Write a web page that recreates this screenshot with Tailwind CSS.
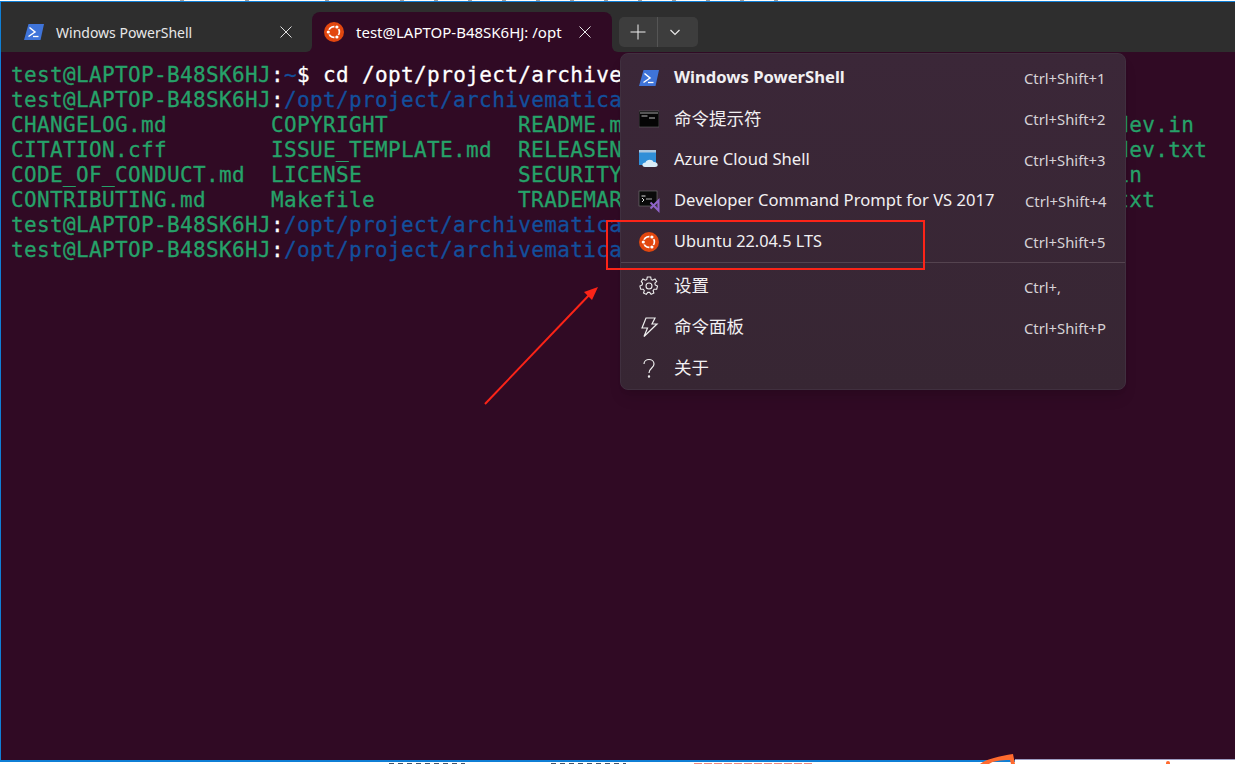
<!DOCTYPE html>
<html lang="en">
<head>
  <meta charset="UTF-8">
  <title>Ubuntu Terminal</title>
  <script src="https://cdn.jsdelivr.net/npm/@tailwindcss/browser@4"></script>
</head>
<body class="bg-white overflow-hidden">
  <div class="relative w-[1235px] h-[764px] pt-px overflow-hidden font-['Noto_Sans','Noto_Sans_CJK_SC',sans-serif]">
    <!-- window -->
    <div class="h-[761px] border border-[#0f7fd6] border-b-2 border-r-0 flex flex-col bg-[#300a24]">
      <!-- tab bar -->
      <div class="h-[50px] shrink-0 flex flex-col bg-[#2e2e2e]">
        <div class="h-[10px] shrink-0"></div>
        <div class="flex-1 flex">
          <div class="w-[311px] bg-[#300a24]">
            <div class="h-full rounded-br-md bg-[#2e2e2e] flex items-center pl-[23px] pr-[20px] text-[#e8e8e8] text-[14px]">
              <svg class="w-5 h-5 mr-[12px] shrink-0" viewBox="0 0 20 20"><path d="M4.500 2h15.500l-3.500 16H0z" fill="#3f74d9"/><path d="M5.500 5.500l5.500 4.500-6.500 4.500" fill="none" stroke="#fff" stroke-width="1.500"/><path d="M9 14.500h5.500" stroke="#fff" stroke-width="1.300"/></svg>
              <span class="flex-1 whitespace-nowrap">Windows PowerShell</span>
              <svg class="w-3 h-3" viewBox="0 0 12 12" fill="none" stroke="#e0e0e0" stroke-width="1"><path d="M.5.5l11 11M11.500.5l-11 11"/></svg>
            </div>
          </div>
          <div class="w-[300px] bg-[#2e2e2e]">
            <div class="h-full rounded-t-lg bg-[#300a24] flex items-center pl-[12px] pr-[21px] text-white text-[15px]">
              <svg class="w-5 h-5 mr-[12px] shrink-0" viewBox="0 0 20 20"><circle cx="10" cy="10" r="10" fill="#e2470f"/><circle cx="10" cy="10" r="5.400" fill="none" stroke="#fff" stroke-width="1.600"/><circle cx="4.300" cy="10" r="2.600" fill="#e2470f"/><circle cx="12.900" cy="5" r="2.600" fill="#e2470f"/><circle cx="12.900" cy="15" r="2.600" fill="#e2470f"/><circle cx="4.300" cy="10" r="1.600" fill="#fff"/><circle cx="12.900" cy="5" r="1.600" fill="#fff"/><circle cx="12.900" cy="15" r="1.600" fill="#fff"/></svg>
              <span class="flex-1 whitespace-nowrap">test@LAPTOP-B48SK6HJ: /opt</span>
              <svg class="w-3 h-3" viewBox="0 0 12 12" fill="none" stroke="#e8e8e8" stroke-width="1"><path d="M.5.5l11 11M11.500.5l-11 11"/></svg>
            </div>
          </div>
          <div class="flex-1 bg-[#300a24]">
            <div class="h-full rounded-bl-md bg-[#2e2e2e] pt-[5px] pl-[7px]">
              <div class="w-[79px] h-[30px] rounded-[5px] bg-[#3d3d3d] flex">
                <div class="w-[39px] flex items-center justify-center border-r border-[#555]">
                  <svg class="w-4 h-4" viewBox="0 0 16 16" stroke="#f0f0f0" stroke-width="1"><path d="M8 .5v15M.5 8h15"/></svg>
                </div>
                <div class="flex-1 flex items-center justify-center pr-[6px]">
                  <svg class="w-3 h-3" viewBox="0 0 12 12" fill="none" stroke="#e8e8e8" stroke-width="1.200"><path d="M1.500 4l4.500 4.500L10.500 4"/></svg>
                </div>
              </div>
            </div>
          </div>
        </div>
      </div>
      <!-- terminal -->
      <pre class="pt-[11px] pl-[10px] font-['DejaVu_Sans_Mono',monospace] text-[21px] tracking-[0.36px] leading-[25px] text-[#26a269] [-webkit-text-stroke:0.3px] overflow-hidden">test@LAPTOP-B48SK6HJ<span class="text-white">:</span><span class="text-[#134f9c]">~</span><span class="text-white">$ cd /opt/project/archivematica</span>
test@LAPTOP-B48SK6HJ<span class="text-white">:</span><span class="text-[#134f9c]">/opt/project/archivematica</span><span class="text-white">$ ls</span>
CHANGELOG.md        COPYRIGHT          README.md                        requirements-dev.in
CITATION.cff        ISSUE_TEMPLATE.md  RELEASENOTES.md                  requirements-dev.txt
CODE_OF_CONDUCT.md  LICENSE            SECURITY.md                      requirements.in
CONTRIBUTING.md     Makefile           TRADEMARK.md                     requirements.txt
test@LAPTOP-B48SK6HJ<span class="text-white">:</span><span class="text-[#134f9c]">/opt/project/archivematica</span><span class="text-white">$</span>
test@LAPTOP-B48SK6HJ<span class="text-white">:</span><span class="text-[#134f9c]">/opt/project/archivematica</span><span class="text-white">$</span></pre>
    </div>

    <!-- dropdown menu -->
    <div class="absolute left-[620px] top-[53px] w-[506px] h-[337px] rounded-lg pt-[3px] bg-gradient-to-b from-[#3b2738] to-[#372633] border border-[#40303f] shadow-lg text-[#f2f0f2] text-[16.6px]">
      <div class="h-[41px] flex items-center pl-[18px]">
        <svg class="w-5 h-5 mr-[15px]" viewBox="0 0 20 20"><path d="M4.500 2h15.500l-3.500 16H0z" fill="#3f74d9"/><path d="M5.500 5.500l5.500 4.500-6.500 4.500" fill="none" stroke="#fff" stroke-width="1.500"/><path d="M9 14.500h5.500" stroke="#fff" stroke-width="1.300"/></svg>
        <span class="w-[350px] font-bold">Windows PowerShell</span>
        <span class="text-[14.8px] pt-[1px] text-[#d6d2d6]">Ctrl+Shift+1</span>
      </div>
      <div class="h-[41px] flex items-center pl-[18px]">
        <svg class="w-5 h-5 mr-[15px]" viewBox="0 0 20 20"><rect y="2" width="20" height="16" fill="#050505" stroke="#666" stroke-width=".6"/><rect x="1" y="3" width="18" height="2" fill="#555"/><path d="M2.500 7h6M10 9h6" stroke="#bbb" stroke-width="1"/></svg>
        <span class="w-[350px] text-[17.5px]">命令提示符</span>
        <span class="text-[14.8px] pt-[1px] text-[#d6d2d6]">Ctrl+Shift+2</span>
      </div>
      <div class="h-[41px] flex items-center pl-[18px]">
        <svg class="w-5 h-5 mr-[15px] overflow-visible" viewBox="0 0 20 20"><rect y="0" width="17" height="15" fill="#2f8fd8"/><rect y="0" width="17" height="2.500" fill="#a9c6de"/><path d="M6 17c-3.500 0-3.500-4.500.5-4.500 1-3.500 7-3.500 8-.5 4.500-.5 6 5 1.500 5z" fill="#d9edf8"/></svg>
        <span class="w-[350px]">Azure Cloud Shell</span>
        <span class="text-[14.8px] pt-[1px] text-[#d6d2d6]">Ctrl+Shift+3</span>
      </div>
      <div class="h-[41px] flex items-center pl-[18px]">
        <svg class="w-5 h-5 mr-[15px] overflow-visible" viewBox="0 0 20 20"><rect y="0" width="18" height="15" fill="#0a0a0a" stroke="#777" stroke-width=".6"/><path d="M2.500 5h4M3 7l2 2-2 2" fill="none" stroke="#ddd" stroke-width="1"/><path d="M7 8h6" stroke="#aaa" stroke-width="1"/><path d="M11.500 11.500l3 3 5-5v10l-5-5-3 3" fill="none" stroke="#8f64c8" stroke-width="2"/></svg>
        <span class="w-[351px]">Developer Command Prompt for VS 2017</span>
        <span class="text-[14.8px] pt-[1px] text-[#d6d2d6]">Ctrl+Shift+4</span>
      </div>
      <div class="h-[41px] flex items-center pl-[18px]">
        <svg class="w-5 h-5 mr-[15px]" viewBox="0 0 20 20"><circle cx="10" cy="10" r="10" fill="#e2470f"/><circle cx="10" cy="10" r="5.400" fill="none" stroke="#fff" stroke-width="1.600"/><circle cx="4.300" cy="10" r="2.600" fill="#e2470f"/><circle cx="12.900" cy="5" r="2.600" fill="#e2470f"/><circle cx="12.900" cy="15" r="2.600" fill="#e2470f"/><circle cx="4.300" cy="10" r="1.600" fill="#fff"/><circle cx="12.900" cy="5" r="1.600" fill="#fff"/><circle cx="12.900" cy="15" r="1.600" fill="#fff"/></svg>
        <span class="w-[350px] text-[16.3px]">Ubuntu 22.04.5 LTS</span>
        <span class="text-[14.8px] pt-[1px] text-[#d6d2d6]">Ctrl+Shift+5</span>
      </div>
      <div class="h-px bg-[#54434f]"></div>
      <div class="h-[43px] flex items-center pl-[18px] pt-[2px]">
        <svg class="w-5 h-5 mr-[15px]" viewBox="0 0 20 20" fill="none" stroke="#eee" stroke-width="1.100"><circle cx="10" cy="10" r="3"/><path d="M8.300 1h3.400l.5 2.500 1.500.7 2.300-1.200 1.700 2.400-1.800 1.800.3 1.700 2.300 1.200-.8 3-2.600.1-1 1.400.8 2.400-2.800 1.400-1.500-2-1.800 0-1.500 2-2.800-1.400.8-2.400-1-1.400-2.600-.1-.8-3 2.300-1.200.3-1.700L2.300 5.400 4 3l2.300 1.200 1.500-.7z"/></svg>
        <span class="w-[350px] text-[17.5px]">设置</span>
        <span class="text-[14.8px] pt-[3px] text-[#d6d2d6]">Ctrl+,</span>
      </div>
      <div class="h-[41px] flex items-center pl-[18px]">
        <svg class="w-5 h-5 mr-[15px]" viewBox="0 0 20 20" fill="none" stroke="#eee" stroke-width="1.200"><path d="M7 1h9l-3 6h5L5 19.500 8.500 11H3z"/></svg>
        <span class="w-[350px] text-[17.5px]">命令面板</span>
        <span class="text-[14.8px] pt-[3px] text-[#d6d2d6]">Ctrl+Shift+P</span>
      </div>
      <div class="h-[41px] flex items-center pl-[18px]">
        <svg class="w-5 h-5 mr-[15px]" viewBox="0 0 20 20" fill="none" stroke="#eee" stroke-width="1.200"><path d="M5 6c0-6 10-6 10 0 0 4-5 4-5 9"/><circle cx="10" cy="18.500" r=".6" fill="#eee"/></svg>
        <span class="text-[17.5px]">关于</span>
      </div>
    </div>

    <!-- red annotation box and arrow -->
    <div class="absolute left-[606px] top-[220px] w-[319px] h-[50px] border-2 border-[#fb2418]"></div>
    <svg class="absolute left-[480px] top-[280px] w-[125px] h-[130px]" viewBox="0 0 125 130">
      <path d="M5 124L112 12" stroke="#fb2418" stroke-width="2" fill="none"/>
      <path d="M118 7l-14 5 8 8z" fill="#fb2418"/>
    </svg>

    <!-- scraps of the desktop around the window -->
    <svg class="absolute left-0 top-0 w-[1235px] h-px" viewBox="0 0 1235 1"><path d="M180 .5h20M245 .5h20M325 .5h14M400 .5h400" stroke="#a0a0a0" stroke-dasharray="4 30"/></svg>
    <svg class="absolute left-0 top-[763px] w-[1235px] h-px" viewBox="0 0 1235 1"><path d="M389 .5h76M551 .5h75" stroke="#44556a" stroke-dasharray="5 4"/><path d="M694 .5h120" stroke="#f08a80" stroke-dasharray="8 2"/></svg>
    <div class="absolute left-[1015px] top-[759px] w-[220px] h-[5px] bg-white border-t border-[#9c9cc0]"></div>
    <svg class="absolute left-[975px] top-[750px] w-[45px] h-[14px]" viewBox="0 0 45 14"><path d="M5 14c6-5 20-8 33-10l2 10h-4l-1-4C25 10 18 11 14 14z" fill="#ff6a2e"/></svg>
    <div class="absolute left-[1166px] top-[761px] w-[4px] h-[3px] rounded-t-full bg-[#ff6a2e]"></div>
  </div>
</body>
</html>
